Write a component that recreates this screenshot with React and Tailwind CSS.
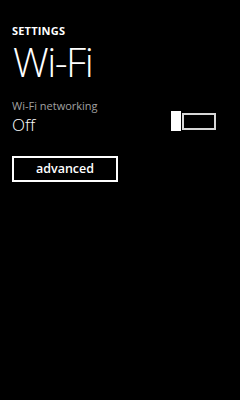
import React, { useState } from "react";

const App = () => {
    const [on, setOn] = useState(false);

    return (
        <div className="w-[240px] h-[400px] bg-black text-white overflow-hidden" style={{ fontFamily: '"Open Sans", "Noto Sans", sans-serif' }}>
            <div className="pl-[12px] pt-[24px]">
                <p className="text-[11px] leading-[14px] font-bold tracking-[0.2px]">SETTINGS</p>
                <h1 className="mt-[1px] text-[40px] leading-[46px] font-light ml-[1px] tracking-[-1.5px]">Wi-Fi</h1>
            </div>
            <div className="pl-[12px] pr-[24px] mt-[14px] flex items-start justify-between">
                <div>
                    <p className="text-[11px] leading-[14px] text-[#a0a0a0]">Wi-Fi networking</p>
                    <p className="mt-[1px] text-[17px] leading-[22px] font-light">{on ? "On" : "Off"}</p>
                </div>
                <button onClick={() => setOn(!on)} className="mt-[12px] flex items-center">
                    <span className="block w-[10px] h-[20px] bg-white"></span>
                    <span className="block w-[34px] h-[17px] ml-[1px] border-2 border-[#d8d8d8]"></span>
                </button>
            </div>
            <div className="pl-[12px] mt-[19px]">
                <button className="w-[106px] h-[26px] border-2 border-white text-[12.5px] font-semibold leading-none">
                    advanced
                </button>
            </div>
        </div>
    );
}
export default App
